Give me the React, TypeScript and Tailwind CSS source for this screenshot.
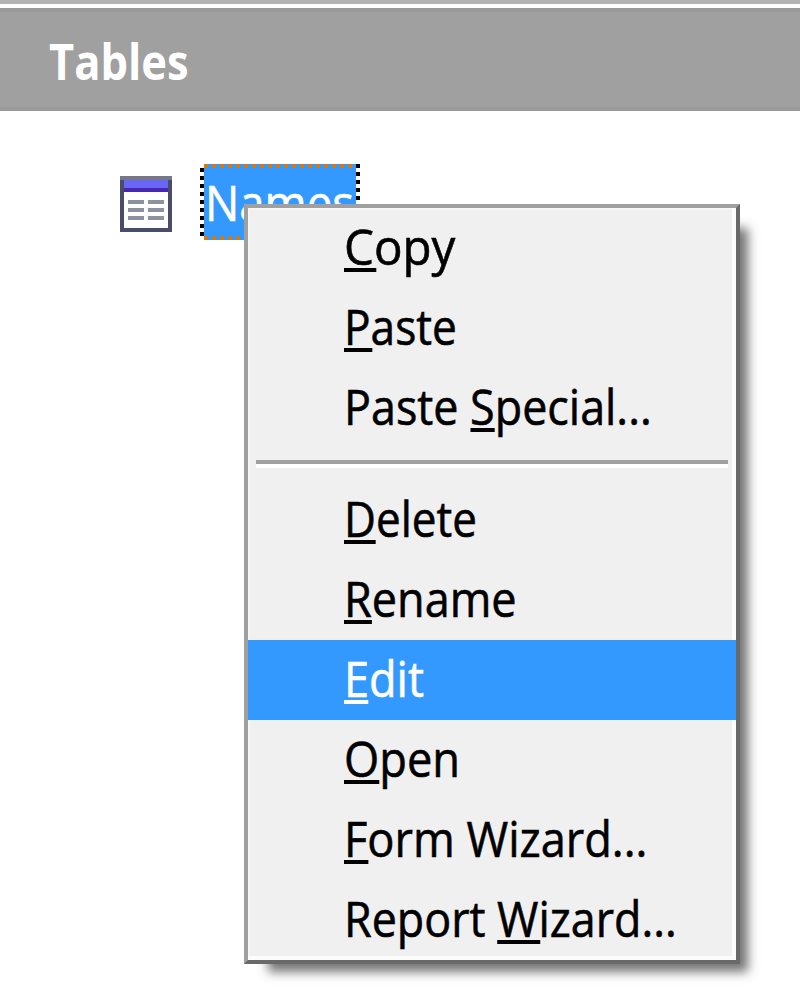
import React from "react";

type Item = { before?: string; key: string; after: string; fit: string; line: string; active?: boolean };

const editItems: Item[] = [
  { key: "C", after: "opy", fit: "scale-x-[0.95]", line: "w-[34px]" },
  { key: "P", after: "aste", fit: "scale-x-[0.885]", line: "w-[32px]" },
  { before: "Paste ", key: "S", after: "pecial...", fit: "scale-x-[0.897]", line: "w-[27px]" },
];

const objectItems: Item[] = [
  { key: "D", after: "elete", fit: "scale-x-[0.88]", line: "w-[36px]" },
  { key: "R", after: "ename", fit: "scale-x-[0.9]", line: "w-[31px]" },
  { key: "E", after: "dit", fit: "scale-x-[0.9]", line: "w-[27px]", active: true },
  { key: "O", after: "pen", fit: "scale-x-[0.905]", line: "w-[39px]" },
  { key: "F", after: "orm Wizard...", fit: "scale-x-[0.903]", line: "w-[27px]" },
  { before: "Report ", key: "W", after: "izard...", fit: "scale-x-[0.896]", line: "w-[48px]" },
];

function MenuItem({ item }: { item: Item }) {
  return (
    <div
      className={`flex h-20 shrink-0 items-start ${
        item.active ? "-mx-1 bg-[#3399ff] pl-24 text-white" : "pl-[92px] text-black"
      }`}
    >
      <span
        className={`block origin-left whitespace-pre text-[50px] leading-[76px] [-webkit-text-stroke:0.6px_currentColor] ${item.fit}`}
      >
        {item.before}
        <span className="relative">
          {item.key}
          <span className={`absolute top-[56px] left-0 h-1 bg-current ${item.line}`} />
        </span>
        {item.after}
      </span>
    </div>
  );
}

function TableIcon() {
  return (
    <svg width="52" height="56" viewBox="0 0 13 14" shapeRendering="crispEdges">
      <rect width="13" height="14" fill="#484c66" />
      <rect width="13" height="1" fill="#77778c" />
      <rect x="1" y="1" width="11" height="2" fill="#6a66f4" />
      <rect x="1" y="3" width="11" height="1" fill="#4826ae" />
      <rect x="1" y="4" width="11" height="9" fill="#fff" />
      {[6, 8, 10].map((y) => (
        <g key={y} fill="#8d92a0">
          <rect x="2" y={y} width="4" height="1" />
          <rect x="7" y={y} width="4" height="1" />
        </g>
      ))}
    </svg>
  );
}

export default function App() {
  return (
    <div className="relative h-[992px] w-[800px] overflow-hidden bg-white font-['Open_Sans','Noto_Sans',sans-serif]">
      <div className="h-1 bg-[#b2b2b2]" />
      <div className="mt-1 flex h-[103px] items-start border-y-4 border-[#999999] bg-[#a0a0a0] pl-[49px]">
        <span className="origin-left scale-x-[0.87] text-[50px] leading-[99px] font-bold text-white">Tables</span>
      </div>
      <div className="flex items-start pt-[53px] pl-[120px]">
        <div className="mt-3">
          <TableIcon />
        </div>
        <div className="ml-7 flex h-[76px] w-40">
          <div className="mt-1 h-[68px] w-1 bg-[repeating-linear-gradient(to_bottom,#000_0_4px,#fff_4px_8px)]" />
          <div className="flex w-[152px] flex-col bg-[#3399ff]">
            <div className="h-1 shrink-0 bg-[repeating-linear-gradient(to_right,#d47811_0_4px,#3399ff_4px_8px)]" />
            <div className="h-[68px] pl-px">
              <span className="block origin-left scale-x-[0.91] text-[50px] leading-[68px] text-white [-webkit-text-stroke:0.6px_currentColor]">
                Names
              </span>
            </div>
            <div className="h-1 shrink-0 bg-[repeating-linear-gradient(to_right,#d47811_0_4px,#3399ff_4px_8px)]" />
          </div>
          <div className="h-[76px] w-1 bg-[repeating-linear-gradient(to_bottom,#000_0_4px,#fff_4px_8px)]" />
        </div>
      </div>

      <div className="absolute top-[204px] left-[244px] w-[496px] border-4 border-t-[#a0a0a0] border-r-[#696969] border-b-[#696969] border-l-[#a0a0a0] bg-[#f0f0f0] shadow-[16px_16px_10px_-8px_rgba(0,0,0,0.54)]">
        <div className="flex h-[752px] flex-col px-1 shadow-[inset_-4px_-4px_0_#fcfcfc,inset_2px_2px_0_#f6f6f6]">
          {editItems.map((item) => (
            <MenuItem key={item.key} item={item} />
          ))}
          <div className="mx-1 mt-3 mb-3 h-2 shrink-0 border-t-4 border-[#a0a0a0] bg-white" />
          {objectItems.map((item) => (
            <MenuItem key={item.key} item={item} />
          ))}
        </div>
      </div>
    </div>
  );
}
